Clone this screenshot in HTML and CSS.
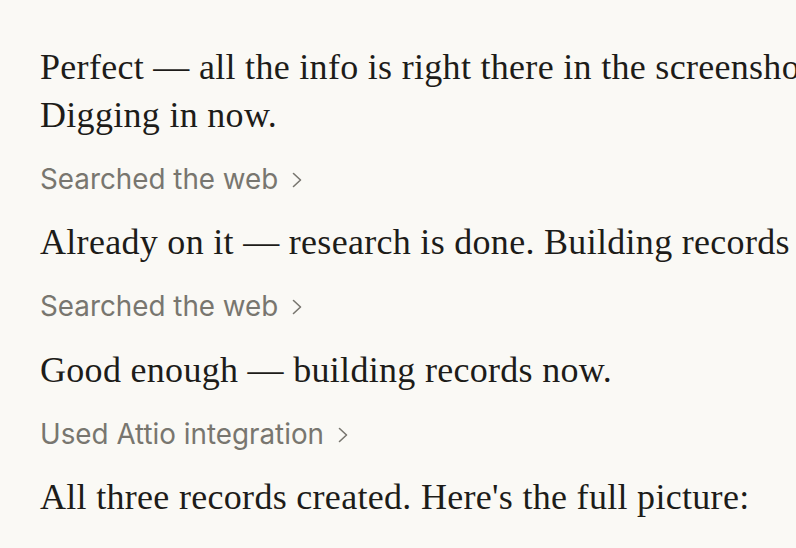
FILE: index.html
```html
<!DOCTYPE html>
<html>
<head>
<meta charset="utf-8">
<link rel="stylesheet" href="styles.css">
</head>
<body>
<main class="thread">
  <p class="msg">Perfect — all the info is right there in the screenshot. Digging in now.</p>
  <div class="tool"><span>Searched the web</span><svg class="chev" viewBox="0 0 10 16"><path d="M1.5 1.5 L8.5 8 L1.5 14.5" fill="none" stroke="currentColor" stroke-width="1.6" stroke-linecap="round" stroke-linejoin="round"/></svg></div>
  <p class="msg">Already on it — research is done. Building records now.</p>
  <div class="tool"><span>Searched the web</span><svg class="chev" viewBox="0 0 10 16"><path d="M1.5 1.5 L8.5 8 L1.5 14.5" fill="none" stroke="currentColor" stroke-width="1.6" stroke-linecap="round" stroke-linejoin="round"/></svg></div>
  <p class="msg">Good enough — building records now.</p>
  <div class="tool"><span>Used Attio integration</span><svg class="chev" viewBox="0 0 10 16"><path d="M1.5 1.5 L8.5 8 L1.5 14.5" fill="none" stroke="currentColor" stroke-width="1.6" stroke-linecap="round" stroke-linejoin="round"/></svg></div>
  <p class="msg">All three records created. Here's the full picture:</p>
</main>
</body>
</html>
```
FILE: styles.css
```css
html, body {
  margin: 0;
  padding: 0;
  background: #faf9f5;
  overflow: hidden;
  height: 548px;
}
.thread {
  width: 850px;
  padding: 42.85px 0 0 40px;
  display: flex;
  flex-direction: column;
}
.msg {
  margin: 0;
  font-family: "Liberation Serif", serif;
  font-size: 36px;
  letter-spacing: 0.3px;
  line-height: 48px;
  color: #1d1c19;
}
.tool {
  display: flex;
  align-items: center;
  gap: 14px;
  padding: 23.95px 0 23.55px;
  font-family: "Inter", "Noto Sans", sans-serif;
  font-size: 27.8px;
  line-height: 32px;
  color: #78766f;
}
.chev {
  width: 10px;
  height: 16px;
  margin-top: 2px;
}
```
